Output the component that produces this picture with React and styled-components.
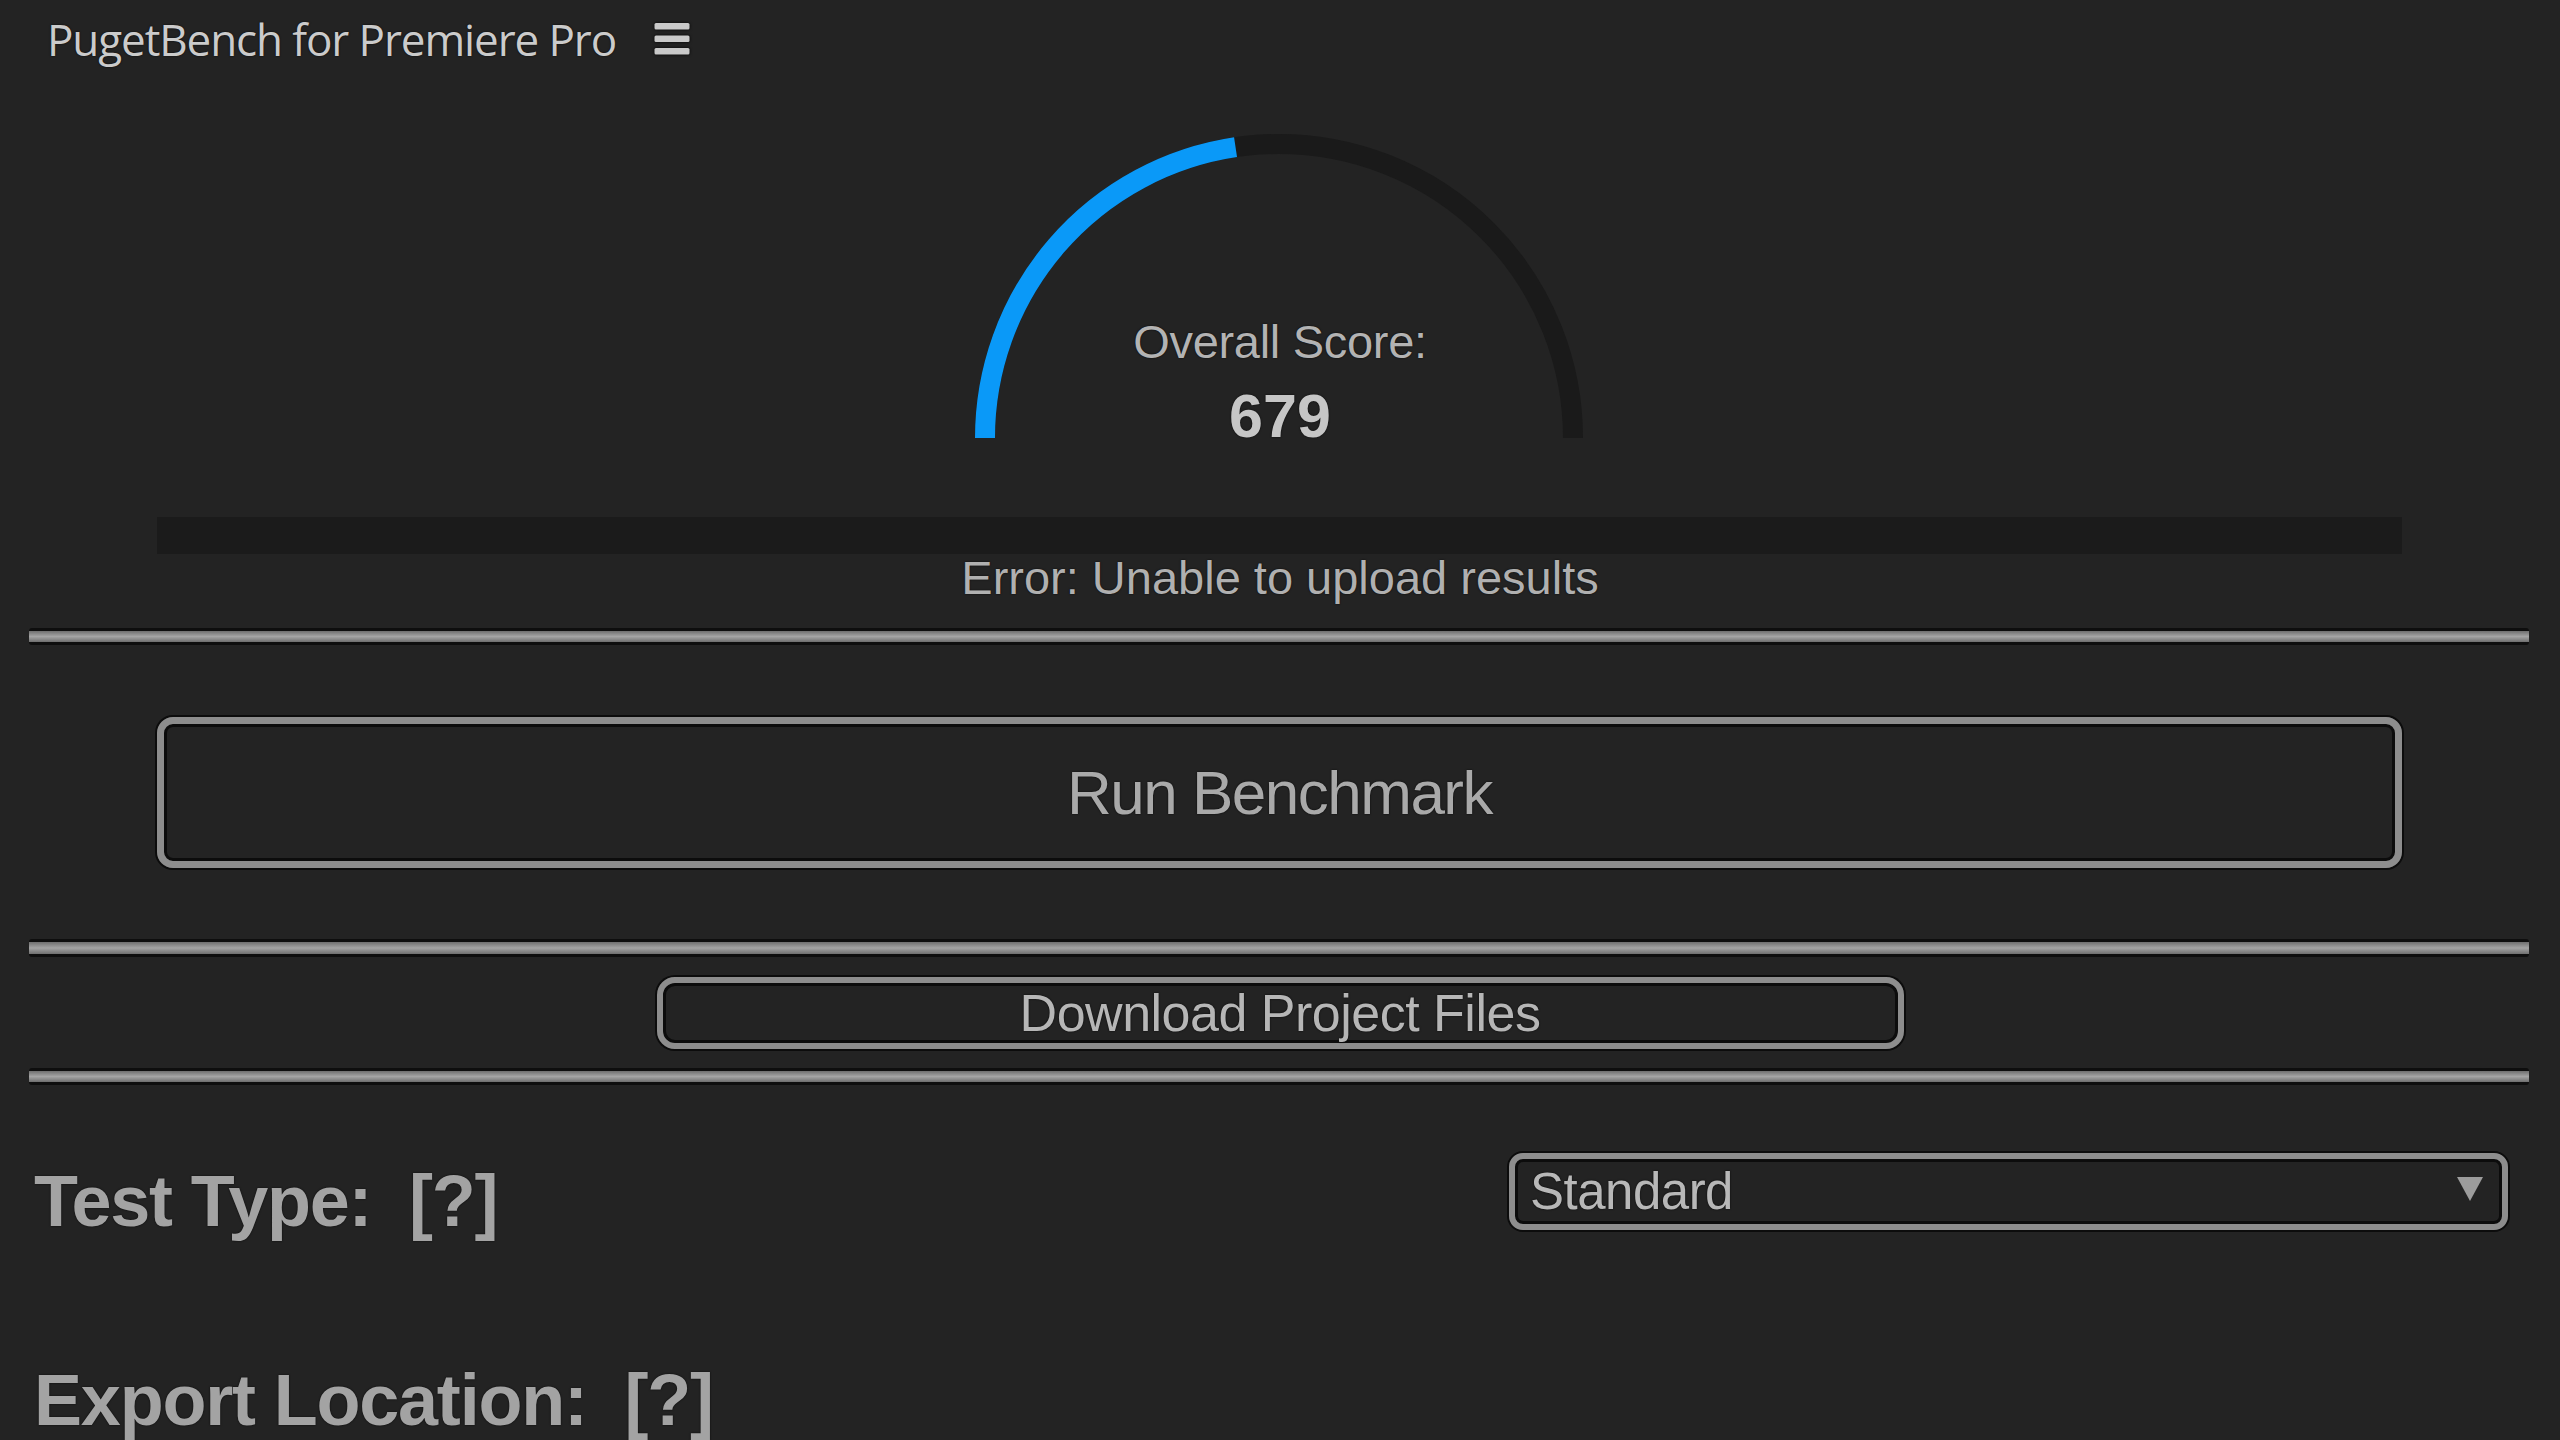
import React from "react";
import styled, { createGlobalStyle } from "styled-components";

const GlobalStyle = createGlobalStyle`
  html, body {
    margin: 0;
    padding: 0;
    background: #232323;
  }
`;

const Panel = styled.div`
  width: 2560px;
  height: 1440px;
  overflow: hidden;
  background: #232323;
  font-family: "Liberation Sans", Arial, sans-serif;
  display: flex;
  flex-direction: column;
  text-shadow: 0 0 2px rgba(0, 0, 0, 0.85);
`;

const Header = styled.div`
  height: 82px;
  display: flex;
  align-items: center;
  gap: 38px;
  padding-left: 47px;
`;

const Title = styled.div`
  font-family: "Open Sans", "Noto Sans", sans-serif;
  font-size: 44px;
  letter-spacing: -1.1px;
  color: #cbcbcb;
  line-height: 1;
`;

const MenuIcon = styled.svg`
  width: 36px;
  height: 34px;
  filter: drop-shadow(0 0 1.5px #000);
`;

const GaugeWrap = styled.div`
  position: relative;
  align-self: center;
  margin-top: 54px;
  width: 632px;
  height: 316px;
`;

const Labels = styled.div`
  position: absolute;
  left: 0;
  right: 0;
  top: 183px;
  display: flex;
  flex-direction: column;
  align-items: center;
`;

const ScoreCaption = styled.div`
  font-size: 47px;
  line-height: 54px;
  letter-spacing: -0.3px;
  color: #b3b3b3;
`;

const ScoreValue = styled.div`
  margin-top: 14px;
  font-size: 61px;
  font-weight: bold;
  line-height: 66px;
  color: #c6c6c6;
`;

const UploadBar = styled.div`
  margin: 69px 158px 0 157px;
  height: 38px;
  background: #1b1b1b;
`;

const Status = styled.div`
  font-size: 47px;
  line-height: 48px;
  text-align: center;
  color: #b0b0b0;
`;

const Rule = styled.div`
  margin: ${(p) => p.$top}px 31px 0 29px;
  height: 12px;
  border-top: 3px solid #0e0e0e;
  border-bottom: 3px solid #0e0e0e;
  border-radius: 3px;
  background: linear-gradient(#6f6f6f, #a4a4a4 50%, #6f6f6f);
`;

const Button = styled.div`
  box-sizing: border-box;
  display: flex;
  align-items: center;
  justify-content: center;
  margin-top: ${(p) => p.$top}px;
  border: ${(p) => (p.$big ? 7 : 6)}px solid #8d8d8d;
  border-radius: ${(p) => (p.$big ? 16 : 18)}px;
  box-shadow: 0 0 0 2px #0c0c0c, inset 0 0 0 3px #0c0c0c;
  color: ${(p) => (p.$big ? "#a9a9a9" : "#b6b6b6")};
  cursor: pointer;
`;

const RunButton = styled(Button)`
  margin-left: 157px;
  margin-right: 158px;
  height: 157px;
  font-size: 62px;
  letter-spacing: -1.5px;
`;

const DownloadButton = styled(Button)`
  align-self: center;
  width: 1247px;
  height: 74px;
  font-size: 52px;
  letter-spacing: -0.5px;
`;

const FieldRow = styled.div`
  display: flex;
  justify-content: space-between;
  align-items: flex-start;
  margin-top: ${(p) => p.$top}px;
  padding: 0 52px 0 34px;
`;

const FieldLabel = styled.div`
  margin-top: ${(p) => p.$offset || 0}px;
  font-size: 72px;
  font-weight: bold;
  letter-spacing: -1.2px;
  line-height: 80px;
  color: #a3a3a3;
  white-space: pre;
`;

const Select = styled.div`
  box-sizing: border-box;
  width: 999px;
  height: 77px;
  display: flex;
  align-items: center;
  justify-content: space-between;
  padding: 0 19px 0 15px;
  border: 6px solid #8d8d8d;
  border-radius: 14px;
  box-shadow: 0 0 0 2px #0c0c0c, inset 0 0 0 3px #0c0c0c;
  font-size: 51px;
  letter-spacing: -0.5px;
  color: #b8b8b8;
`;

const Caret = styled.span`
  width: 0;
  height: 0;
  margin-top: -6px;
  border-left: 13px solid transparent;
  border-right: 13px solid transparent;
  border-top: 24px solid #9c9c9c;
`;

const SCORE = 679;
const SCORE_MAX = 1500;

function ScoreGauge({ score, max }) {
  const cx = 315;
  const cy = 306;
  const r = 294;
  const arc = `M ${cx - r} ${cy} A ${r} ${r} 0 0 1 ${cx + r} ${cy}`;
  const filled = (score / max) * 100;
  return (
    <GaugeWrap>
      <svg width="632" height="316" viewBox="0 0 632 316">
        <path d={arc} fill="none" stroke="#1a1a1a" strokeWidth="20" />
        <path
          d={arc}
          fill="none"
          stroke="#0a99f8"
          strokeWidth="20"
          pathLength="100"
          strokeDasharray={`${filled} 100`}
        />
      </svg>
      <Labels>
        <ScoreCaption>Overall Score:</ScoreCaption>
        <ScoreValue>{score}</ScoreValue>
      </Labels>
    </GaugeWrap>
  );
}

export default function App() {
  return (
    <Panel>
      <GlobalStyle />
      <Header>
        <Title>PugetBench for Premiere Pro</Title>
        <MenuIcon viewBox="0 0 36 34">
          <rect x="0.5" y="1" width="35" height="6.5" rx="1.5" fill="#c9c9c9" />
          <rect x="0.5" y="13.5" width="35" height="6.5" rx="1.5" fill="#c9c9c9" />
          <rect x="0.5" y="26" width="35" height="6.5" rx="1.5" fill="#c9c9c9" />
        </MenuIcon>
      </Header>

      <ScoreGauge score={SCORE} max={SCORE_MAX} />

      <UploadBar />
      <Status>Error: Unable to upload results</Status>

      <Rule $top={26} />
      <RunButton $big $top={72}>Run Benchmark</RunButton>
      <Rule $top={71} />
      <DownloadButton $top={20}>Download Project Files</DownloadButton>
      <Rule $top={19} />

      <FieldRow $top={68}>
        <FieldLabel $offset={8}>{"Test Type:  [?]"}</FieldLabel>
        <Select>
          <span>Standard</span>
          <Caret />
        </Select>
      </FieldRow>
      <FieldRow $top={119}>
        <FieldLabel>{"Export Location:  [?]"}</FieldLabel>
      </FieldRow>
    </Panel>
  );
}
